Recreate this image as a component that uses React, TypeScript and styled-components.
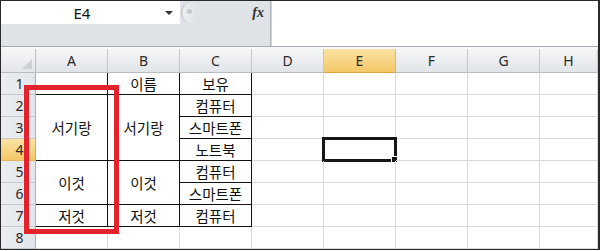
import styled, { createGlobalStyle } from "styled-components";

type Cell = {
  col: number;
  row: number;
  span?: number;
  text?: string;
};

const COLUMNS = ["A", "B", "C", "D", "E", "F", "G", "H"];
const ROWS = [1, 2, 3, 4, 5, 6, 7, 8];
const ACTIVE = { col: 5, row: 4 };

// A1:C7 is the bordered table, everything else plain grid
const tableCells: Cell[] = [
  { col: 1, row: 1 },
  { col: 2, row: 1, text: "이름" },
  { col: 3, row: 1, text: "보유" },
  { col: 1, row: 2, span: 3, text: "서기랑" },
  { col: 2, row: 2, span: 3, text: "서기랑" },
  { col: 3, row: 2, text: "컴퓨터" },
  { col: 3, row: 3, text: "스마트폰" },
  { col: 3, row: 4, text: "노트북" },
  { col: 1, row: 5, span: 2, text: "이것" },
  { col: 2, row: 5, span: 2, text: "이것" },
  { col: 3, row: 5, text: "컴퓨터" },
  { col: 3, row: 6, text: "스마트폰" },
  { col: 1, row: 7, text: "저것" },
  { col: 2, row: 7, text: "저것" },
  { col: 3, row: 7, text: "컴퓨터" },
];

function buildCells(): (Cell & { bordered: boolean })[] {
  const out: (Cell & { bordered: boolean })[] = tableCells.map((c) => ({ ...c, bordered: true }));
  ROWS.forEach((row) => {
    COLUMNS.forEach((_, i) => {
      const col = i + 1;
      if (col <= 3 && row <= 7) return;
      out.push({ col, row, bordered: false });
    });
  });
  return out;
}

export default function App() {
  const cells = buildCells();
  return (
    <>
      <GlobalStyle />
      <Frame>
        <FormulaBar>
          <LeftPane>
            <NameRow>
              <NameBox>
                <NameText>E4</NameText>
                <DropArrow />
              </NameBox>
              <Grip>
                <GripDot />
              </Grip>
              <Fx>fx</Fx>
            </NameRow>
          </LeftPane>
          <FormulaInput />
        </FormulaBar>
        <Divider />
        <Sheet>
          <Corner>
            <CornerTriangle />
          </Corner>
          {COLUMNS.map((c, i) => (
            <ColHeader key={c} $col={i + 1} $active={i + 1 === ACTIVE.col}>
              {c}
            </ColHeader>
          ))}
          {ROWS.map((r) => (
            <RowHeader key={r} $row={r} $active={r === ACTIVE.row}>
              {r}
            </RowHeader>
          ))}
          {cells.map((c) => (
            <GridCell
              key={`${c.col}-${c.row}`}
              $col={c.col}
              $row={c.row}
              $span={c.span ?? 1}
              $bordered={c.bordered}
            >
              {c.text}
              {c.col === ACTIVE.col && c.row === ACTIVE.row && (
                <Selection>
                  <FillHandle />
                </Selection>
              )}
            </GridCell>
          ))}
          <RedBox />
        </Sheet>
      </Frame>
    </>
  );
}

const GlobalStyle = createGlobalStyle`
  html, body {
    margin: 0;
    padding: 0;
    background: #ffffff;
  }
  body {
    font-family: "Noto Sans CJK KR", "Noto Sans", sans-serif;
  }
`;

const Frame = styled.div`
  width: 600px;
  height: 250px;
  box-sizing: border-box;
  border: 1px solid #2a2a2a;
  border-right-width: 2px;
  overflow: hidden;
  display: flex;
  flex-direction: column;
  background: #ffffff;
`;

const FormulaBar = styled.div`
  display: flex;
  height: 45px;
  flex: none;
`;

const LeftPane = styled.div`
  width: 270px;
  background: #dfe2e7;
  border-right: 1px solid #b4b9c0;
  box-sizing: border-box;
`;

const NameRow = styled.div`
  display: flex;
  align-items: center;
  height: 23px;
`;

const NameBox = styled.div`
  width: 179px;
  height: 23px;
  background: #ffffff;
  display: flex;
  align-items: center;
`;

const NameText = styled.span`
  flex: 1;
  text-align: center;
  font-family: "Noto Sans", "Liberation Sans", sans-serif;
  font-size: 15px;
  color: #111;
  padding-left: 4px;
`;

const DropArrow = styled.span`
  width: 0;
  height: 0;
  margin: 1px 7px 0 6px;
  border-left: 4px solid transparent;
  border-right: 4px solid transparent;
  border-top: 4px solid #333;
`;

const Grip = styled.div`
  width: 13px;
  height: 21px;
  margin-left: 1px;
  border-radius: 11px 0 0 11px;
  border-left: 1px solid #b3b8bf;
  background: linear-gradient(90deg, #eceef1, #e1e4e8);
  display: flex;
  align-items: center;
  justify-content: center;
`;

const GripDot = styled.span`
  width: 5px;
  height: 5px;
  border-radius: 50%;
  background: #c4c8ce;
  margin-left: 2px;
  margin-top: -3px;
`;

const Fx = styled.span`
  margin-left: auto;
  margin-right: 6px;
  font-family: "Liberation Serif", serif;
  font-style: italic;
  font-weight: bold;
  font-size: 14px;
  color: #333;
`;

const FormulaInput = styled.div`
  flex: 1;
  background: #ffffff;
  border-left: 1px solid #cfd3d8;
`;

const Divider = styled.div`
  flex: none;
  height: 2px;
  border-top: 1px solid #a3a9b1;
  background: #f7f8f9;
`;

const Sheet = styled.div`
  position: relative;
  flex: 1;
  display: grid;
  grid-template-columns: 35px repeat(7, 72px) 1fr;
  grid-template-rows: 24px repeat(8, 22px);
`;

const headerBase = `
  box-sizing: border-box;
  display: flex;
  align-items: center;
  justify-content: center;
  font-family: "Noto Sans", "Liberation Sans", sans-serif;
  font-size: 14px;
  color: #2b2b2b;
`;

const Corner = styled.div`
  ${headerBase};
  grid-column: 1;
  grid-row: 1;
  position: relative;
  background: linear-gradient(#f5f6f8, #e3e6ea);
  border-right: 1px solid #b8bdc4;
  border-bottom: 1px solid #b8bdc4;
`;

const CornerTriangle = styled.span`
  position: absolute;
  right: 3px;
  bottom: 3px;
  width: 0;
  height: 0;
  border-left: 10px solid transparent;
  border-bottom: 10px solid #cdd1d6;
`;

const ColHeader = styled.div<{ $col: number; $active: boolean }>`
  ${headerBase};
  grid-column: ${(p) => p.$col + 1};
  grid-row: 1;
  background: ${(p) =>
    p.$active ? "linear-gradient(#fbe3a3, #f3c867)" : "linear-gradient(#f5f6f8, #e1e4e8)"};
  border-right: 1px solid ${(p) => (p.$active ? "#e2b65a" : "#c3c8ce")};
  border-bottom: 1px solid ${(p) => (p.$active ? "#d7a845" : "#b8bdc4")};
`;

const RowHeader = styled.div<{ $row: number; $active: boolean }>`
  ${headerBase};
  grid-column: 1;
  grid-row: ${(p) => p.$row + 1};
  background: ${(p) =>
    p.$active ? "linear-gradient(#fbe3a3, #f3c867)" : "linear-gradient(90deg, #eceef1, #e2e5e9)"};
  border-right: 1px solid ${(p) => (p.$active ? "#d7a845" : "#a9afb7")};
  border-bottom: 1px solid ${(p) => (p.$active ? "#e2b65a" : "#c3c8ce")};
  padding-left: 3px;
`;

const GridCell = styled.div<{ $col: number; $row: number; $span: number; $bordered: boolean }>`
  position: relative;
  box-sizing: border-box;
  grid-column: ${(p) => p.$col + 1};
  grid-row: ${(p) => p.$row + 1} / span ${(p) => p.$span};
  display: flex;
  align-items: center;
  justify-content: center;
  font-size: 14.5px;
  color: #111;
  white-space: nowrap;
  border-right: 1px solid ${(p) => (p.$bordered ? "#111" : "#d9d9d9")};
  border-bottom: 1px solid ${(p) => (p.$bordered ? "#111" : "#d9d9d9")};
`;

const Selection = styled.div`
  position: absolute;
  top: -2px;
  left: -2px;
  right: -2px;
  bottom: -2px;
  border: 3px solid #161616;
`;

const FillHandle = styled.span`
  position: absolute;
  right: -4px;
  bottom: -4px;
  width: 5px;
  height: 5px;
  background: #161616;
  border: 1px solid #ffffff;
`;

const RedBox = styled.div`
  position: absolute;
  left: 23px;
  top: 36px;
  width: 95px;
  height: 149px;
  box-sizing: border-box;
  border: 5px solid #e4222c;
  pointer-events: none;
`;
